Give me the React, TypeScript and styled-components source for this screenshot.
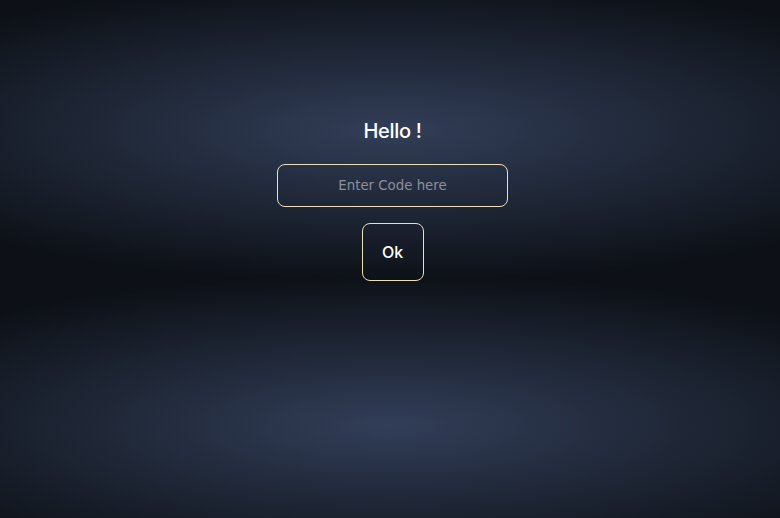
import React from "react";
import styled, { createGlobalStyle } from "styled-components";

const GlobalStyle = createGlobalStyle`
  html, body {
    margin: 0;
    padding: 0;
  }
  body {
    min-height: 518px;
    background-color: #0d1117;
    background-image: radial-gradient(580px 150px at 50% 50%, #323e58 0%, #0d1117 100%);
    background-size: 100% 295px;
    background-repeat: repeat-y;
    background-position: 0 -17px;
  }
`;

const Page = styled.main`
  display: flex;
  flex-direction: column;
  align-items: center;
  padding: 119px 0 0 5px;
  font-family: "Inter", "Noto Sans", sans-serif;
`;

const Title = styled.h2`
  margin: 0;
  font-size: 20px;
  line-height: 24px;
  font-weight: 500;
  letter-spacing: -0.3px;
  color: #ffffff;
`;

const CodeInput = styled.input`
  box-sizing: border-box;
  margin-top: 21px;
  width: 231px;
  height: 43px;
  padding: 0 0 1px;
  border: 1px solid #ebe0b8;
  border-radius: 8px;
  background: transparent;
  color: #ffffff;
  text-align: center;
  font-family: "DejaVu Sans", sans-serif;
  font-size: 13.333px;
  outline: none;
  &::placeholder {
    color: #8b909a;
  }
`;

const OkButton = styled.button`
  box-sizing: border-box;
  margin-top: 16px;
  width: 62px;
  height: 58px;
  border: 1px solid #ebe0b8;
  border-radius: 8px;
  background: transparent;
  color: #ffffff;
  font-family: "Inter", "Noto Sans", sans-serif;
  font-size: 16px;
  font-weight: 500;
  padding: 0 0 1px;
  cursor: pointer;
`;

export default function App() {
  return (
    <>
      <GlobalStyle />
      <Page>
        <Title>Hello !</Title>
        <CodeInput placeholder="Enter Code here" />
        <OkButton>Ok</OkButton>
      </Page>
    </>
  );
}
